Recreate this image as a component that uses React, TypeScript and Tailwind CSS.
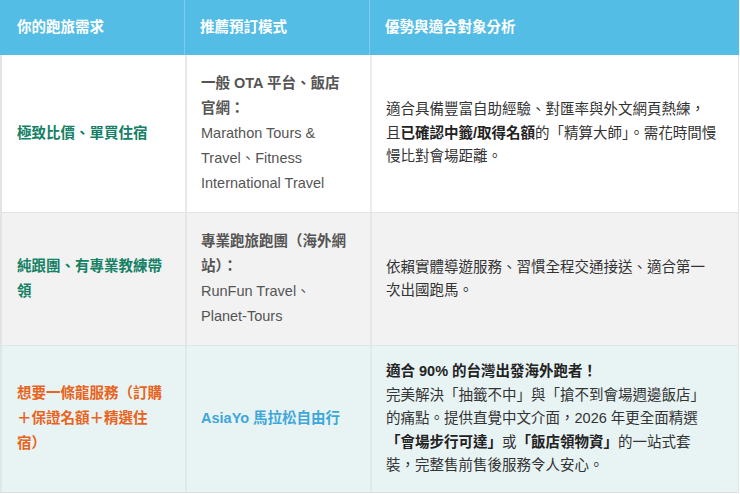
import React from "react";

const font = { fontFamily: '"Liberation Sans", Arial, "Noto Sans CJK TC", sans-serif' };

export default function App() {
  return (
    <div className="w-[740px] h-[494px] bg-white" style={font}>
      <div className="w-[739px] border-b border-[#dedede] text-[14.5px]">
        {/* header */}
        <div className="grid grid-cols-[185px_185px_1fr] h-[55px] bg-[#54bde6] text-white font-bold">
          <div className="flex items-center pl-[17px] border-r border-[#7ccbec]">你的跑旅需求</div>
          <div className="flex items-center pl-[15px] border-r border-[#7ccbec]">推薦預訂模式</div>
          <div className="flex items-center pl-[15px]">優勢與適合對象分析</div>
        </div>

        {/* row 1 */}
        <div className="grid grid-cols-[185px_185px_1fr] bg-white border-l-2 border-r border-[#e3e3e3]">
          <div className="flex items-center pl-[15px] pr-3 border-r-2 border-[#e8e8e8] font-bold text-[#148064] leading-[25px]">
            極致比價、單買住宿
          </div>
          <div className="flex flex-col justify-center pl-[14px] pr-2 py-[16px] border-r-2 border-[#ececec] text-[#555] leading-[25px]">
            <span className="font-bold">一般 OTA 平台、飯店<br />官網：</span>
            <span>Marathon Tours &amp;<br />Travel、Fitness<br />International Travel</span>
          </div>
          <div className="flex items-center pl-[14px] pr-2 text-[#333] leading-[23.5px]">
            <p>
              適合具備豐富自助經驗、對匯率與外文網頁熱練，<br />
              且<b className="text-[#222]">已確認中籤/取得名額</b>的「精算大師」。需花時間慢<br />
              慢比對會場距離。
            </p>
          </div>
        </div>

        {/* row 2 */}
        <div className="grid grid-cols-[185px_185px_1fr] bg-[#f2f2f2] border-l-2 border-r border-t border-[#e3e3e3]">
          <div className="flex items-center pl-[15px] pr-3 border-r-2 border-[#e6e6e6] font-bold text-[#148064] leading-[25px]">
            <p>純跟團、有專業教練帶<br />領</p>
          </div>
          <div className="flex flex-col justify-center pl-[14px] pr-2 py-[16px] border-r-2 border-[#e6e6e6] text-[#555] leading-[25px]">
            <span className="font-bold">專業跑旅跑團（海外網<br />站）：</span>
            <span>RunFun Travel、<br />Planet-Tours</span>
          </div>
          <div className="flex items-center pl-[14px] pr-2 text-[#333] leading-[23.5px]">
            <p>依賴實體導遊服務、習慣全程交通接送、適合第一<br />次出國跑馬。</p>
          </div>
        </div>

        {/* row 3 */}
        <div className="grid grid-cols-[185px_185px_1fr] bg-[#e8f3f4] border-l-2 border-r border-t border-[#e0e6e7]">
          <div className="flex items-center pl-[15px] pr-3 border-r-2 border-[#e0e8e9] font-bold text-[#e8641c] leading-[25px]">
            <p>想要一條龍服務（訂購<br />＋保證名額＋精選住<br />宿）</p>
          </div>
          <div className="flex items-center pl-[14px] pr-2 border-r-2 border-[#e0e8e9] font-bold text-[#3ea7d9]">
            AsiaYo 馬拉松自由行
          </div>
          <div className="flex items-center pl-[14px] pr-2 py-[14px] text-[#333] leading-[23.5px]">
            <p>
              <b className="text-[#222]">適合 90% 的台灣出發海外跑者！</b><br />
              完美解決「抽籤不中」與「搶不到會場週邊飯店」<br />
              的痛點。提供直覺中文介面，2026 年更全面精選<br />
              <b className="text-[#222]">「會場步行可達」</b>或<b className="text-[#222]">「飯店領物資」</b>的一站式套<br />
              裝，完整售前售後服務令人安心。
            </p>
          </div>
        </div>
      </div>
    </div>
  );
}
